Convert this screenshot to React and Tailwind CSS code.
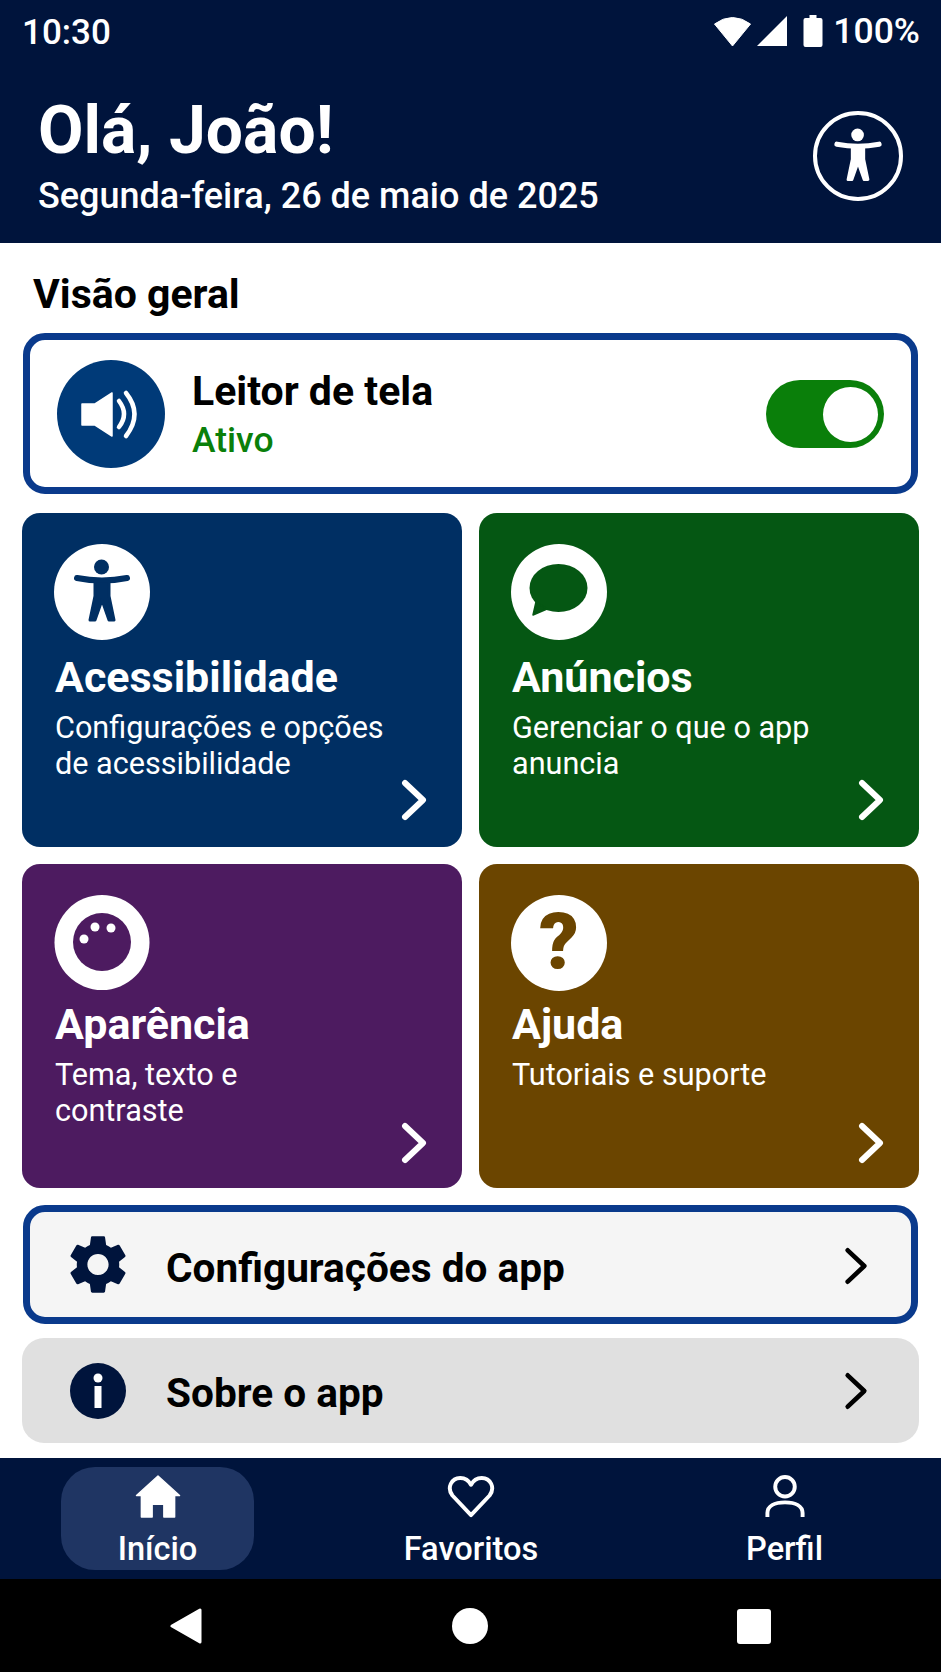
import { useState } from 'react';

function Figure({ className, color }) {
  return (
    <svg viewBox="-32 -34 64 68" className={className}>
      <circle cx="-0.5" cy="-25" r="7.5" fill={color} />
      <path d="M-25 -14 Q0 -9 25 -14" fill="none" stroke={color} strokeWidth="6" strokeLinecap="round" />
      <path
        d="M-7 -11 L7 -11 L7 4 L12 28 L7 28 L0 8 L-7 28 L-12 28 L-7 4 Z"
        fill={color}
        stroke={color}
        strokeWidth="3"
        strokeLinejoin="round"
      />
    </svg>
  );
}

function Chevron({ className, stroke = 'white', width = 6 }) {
  return (
    <svg viewBox="0 0 26 42" className={className}>
      <path d="M4 4 L22 21 L4 38" fill="none" stroke={stroke} strokeWidth={width} strokeLinecap="round" strokeLinejoin="round" />
    </svg>
  );
}

function Bubble({ color }) {
  return (
    <svg viewBox="0 0 96 96" className="w-24 h-24 shrink-0">
      <circle cx="48" cy="48" r="48" fill="white" />
      <ellipse cx="47.5" cy="44" rx="29" ry="24" fill={color} />
      <path d="M25 58 L22 71 L36 65 Z" fill={color} stroke={color} strokeWidth="1.5" strokeLinejoin="round" />
    </svg>
  );
}

function Ball({ color }) {
  return (
    <svg viewBox="0 0 96 96" className="w-24 h-24 shrink-0">
      <circle cx="48" cy="47.5" r="47.5" fill="white" />
      <circle cx="48" cy="47" r="29" fill={color} />
      <circle cx="30" cy="44" r="4.5" fill="white" />
      <circle cx="41" cy="32" r="4.5" fill="white" />
      <circle cx="57" cy="33" r="4.5" fill="white" />
    </svg>
  );
}

const cards = [
  {
    title: 'Acessibilidade',
    lines: ['Configurações e opções', 'de acessibilidade'],
    bg: 'bg-[#002f63]',
    icon: (
      <div className="w-24 h-24 shrink-0 rounded-full bg-white flex items-center justify-center">
        <Figure className="w-[64px] h-[68px]" color="#002f63" />
      </div>
    ),
  },
  {
    title: 'Anúncios',
    lines: ['Gerenciar o que o app', 'anuncia'],
    bg: 'bg-[#055713]',
    icon: <Bubble color="#055713" />,
  },
  {
    title: 'Aparência',
    lines: ['Tema, texto e', 'contraste'],
    bg: 'bg-[#4d1b60]',
    icon: <Ball color="#4d1b60" />,
  },
  {
    title: 'Ajuda',
    lines: ['Tutoriais e suporte'],
    bg: 'bg-[#6b4500]',
    icon: (
      <div className="w-24 h-24 shrink-0 rounded-full bg-white flex items-center justify-center">
        <span className="text-[78px] leading-none font-black text-[#6b4500]">?</span>
      </div>
    ),
  },
];

function Card({ card, tall }) {
  return (
    <div className={`${card.bg} relative rounded-[18px] flex flex-col pl-[32px] pt-[31px] text-white ${tall ? 'h-[334px]' : 'h-[324px]'}`}>
      {card.icon}
      <h3 className={`text-[43px] leading-[48px] font-bold pl-px ${tall ? 'mt-[13px]' : 'mt-[9px]'}`}>{card.title}</h3>
      <p className="text-[30.6px] leading-[36px] mt-[9px] pl-px">
        {card.lines.map((l) => (
          <span key={l} className="block">{l}</span>
        ))}
      </p>
      <Chevron className={`absolute right-[35px] w-[26px] h-[42px] ${tall ? 'bottom-[26px]' : 'bottom-[24px]'}`} />
    </div>
  );
}

function NavItem({ label, active, children }) {
  return (
    <div className={`w-[193px] h-[103px] rounded-[34px] flex flex-col items-center pt-[8px] text-white ${active ? 'bg-[#1f3563]' : ''}`}>
      <div className="h-[43px] flex items-center justify-center">{children}</div>
      <span className="text-[32.6px] leading-[36px] font-medium mt-[13px]">{label}</span>
    </div>
  );
}

export default function App() {
  const [reader, setReader] = useState(true);

  return (
    <div className="w-[941px] h-[1672px] flex flex-col bg-white font-['Roboto',sans-serif] overflow-hidden">
      <header className="h-[243px] bg-[#00143c] text-white shrink-0">
        <div className="h-[62px] flex items-center justify-between pl-[22px] pr-[21px]">
          <span className="text-[35px] font-medium leading-none mt-[2px]">10:30</span>
          <div className="flex items-center">
            <svg viewBox="0 0 36 30" className="w-[37px] h-[30px]">
              <path d="M0 8 Q18 -5 36 8 L18 30 Z" fill="white" stroke="white" strokeWidth="1" strokeLinejoin="round" />
            </svg>
            <svg viewBox="0 0 29 29" className="w-[30px] h-[30px] ml-[6px]">
              <path d="M29 0 L29 29 L0 29 Z" fill="white" />
            </svg>
            <svg viewBox="0 0 19 32" className="w-[20px] h-[32px] ml-[16px]">
              <path d="M6 0 H13 V3 H17 Q19 3 19 5 V30 Q19 32 17 32 H2 Q0 32 0 30 V5 Q0 3 2 3 H6 Z" fill="white" />
            </svg>
            <span className="text-[35.5px] font-medium leading-none ml-[10px] mt-[2px]">100%</span>
          </div>
        </div>
        <div className="flex items-start justify-between pl-[38px] pr-[38px]">
          <div>
            <h1 className="text-[66px] leading-[70px] font-bold mt-[34px]">Olá, João!</h1>
            <p className="text-[36px] leading-[42px] font-medium mt-[9px]">Segunda-feira, 26 de maio de 2025</p>
          </div>
          <div className="w-[90px] h-[90px] rounded-full border-[4px] border-white flex items-center justify-center mt-[49px]">
            <Figure className="w-[54px] h-[58px]" color="white" />
          </div>
        </div>
      </header>

      <main className="flex-1 flex flex-col px-[22px]">
        <h2 className="text-[41px] leading-[42px] font-bold text-black pl-[11px] mt-[30px] mb-[18px]">Visão geral</h2>

        <div className="h-[161px] border-[7px] border-[#0a3a8c] rounded-[22px] mx-px flex items-center pl-[27px] pr-[27px] bg-white">
          <div className="w-[108px] h-[108px] rounded-full bg-[#003a78] shrink-0">
            <svg viewBox="0 0 108 108" className="w-full h-full">
              <path d="M25 44 H38 L55 33 V76 L38 65 H25 Z" fill="white" stroke="white" strokeWidth="1.5" strokeLinejoin="round" />
              <path d="M62 41 Q72 54 62 67" fill="none" stroke="white" strokeWidth="4.5" strokeLinecap="round" />
              <path d="M69 33 Q86 54 69 76" fill="none" stroke="white" strokeWidth="4.5" strokeLinecap="round" />
            </svg>
          </div>
          <div className="ml-[27px] flex-1">
            <div className="text-[41px] leading-[46px] font-bold text-black -mt-[1px]">Leitor de tela</div>
            <div className="text-[35.5px] leading-[38px] font-medium text-[#0a7f0a] mt-[7px]">Ativo</div>
          </div>
          <button
            onClick={() => setReader(!reader)}
            className={`w-[118px] h-[68px] mt-[1px] rounded-full bg-[#0a7f0a] flex items-center px-[6px] ${reader ? 'justify-end' : 'justify-start'}`}
          >
            <span className="w-[55px] h-[55px] rounded-full bg-white block" />
          </button>
        </div>

        <div className="grid grid-cols-2 gap-x-[17px] mt-[19px]">
          <Card card={cards[0]} tall />
          <Card card={cards[1]} tall />
        </div>
        <div className="grid grid-cols-2 gap-x-[17px] mt-[17px]">
          <Card card={cards[2]} />
          <Card card={cards[3]} />
        </div>

        <div className="h-[119px] mt-[17px] mx-px border-[7px] border-[#0a3a8c] rounded-[22px] bg-[#f5f5f5] flex items-center pl-[40px] pr-[43px]">
          <svg viewBox="2.5 2 19 20" className="w-[56px] h-[59px] shrink-0">
            <path
              fill="#00143c"
              d="M19.14 12.94c.04-.3.06-.61.06-.94 0-.32-.02-.64-.07-.94l2.03-1.58c.18-.14.23-.41.12-.61l-1.92-3.32c-.12-.22-.37-.29-.59-.22l-2.39.96c-.5-.38-1.03-.7-1.62-.94l-.36-2.54c-.04-.24-.24-.41-.48-.41h-3.84c-.24 0-.43.17-.47.41l-.36 2.54c-.59.24-1.13.57-1.62.94l-2.39-.96c-.22-.08-.47 0-.59.22L2.74 8.87c-.12.21-.08.47.12.61l2.03 1.58c-.05.3-.09.63-.09.94s.02.64.07.94l-2.03 1.58c-.18.14-.23.41-.12.61l1.92 3.32c.12.22.37.29.59.22l2.39-.96c.5.38 1.03.7 1.62.94l.36 2.54c.05.24.24.41.48.41h3.84c.24 0 .44-.17.47-.41l.36-2.54c.59-.24 1.13-.56 1.62-.94l2.39.96c.22.08.47 0 .59-.22l1.92-3.32c.12-.22.07-.47-.12-.61l-2.01-1.58zM12 15.6c-1.98 0-3.6-1.62-3.6-3.6s1.62-3.6 3.6-3.6 3.6 1.62 3.6 3.6-1.62 3.6-3.6 3.6z"
            />
          </svg>
          <span className="text-[40.6px] leading-[46px] font-bold text-black ml-[40px] mt-[6px] flex-1">Configurações do app</span>
          <Chevron className="w-[24px] h-[42px] mt-[3px]" stroke="black" width={5} />
        </div>

        <div className="h-[105px] mt-[14px] rounded-[22px] bg-[#e0e0e0] flex items-center pl-[48px] pr-[51px]">
          <svg viewBox="0 0 56 56" className="w-[56px] h-[56px] shrink-0">
            <circle cx="28" cy="28" r="28" fill="#00143c" />
            <circle cx="28" cy="15" r="4.5" fill="white" />
            <rect x="24.5" y="23" width="7" height="22" fill="white" />
          </svg>
          <span className="text-[40.6px] leading-[46px] font-bold text-black ml-[40px] mt-[4px] flex-1">Sobre o app</span>
          <Chevron className="w-[24px] h-[42px]" stroke="black" width={5} />
        </div>
      </main>

      <nav className="h-[121px] bg-[#00143c] shrink-0 flex justify-between pt-[9px] pl-[61px] pr-[60px]">
        <NavItem label="Início" active>
          <svg viewBox="0 0 46 44" className="w-[46px] h-[43px]">
            <path
              fillRule="evenodd"
              d="M23 1 L45 21 H40 V43 H29 V30 H17 V43 H6 V21 H1 Z"
              fill="white"
              stroke="white"
              strokeWidth="1.5"
              strokeLinejoin="round"
            />
          </svg>
        </NavItem>
        <NavItem label="Favoritos">
          <svg viewBox="0 0 48 44" className="w-[48px] h-[43px]">
            <path
              d="M24 41 L5 21 C-1 13 4 3 13 3 C18 3 22 6 24 10 C26 6 30 3 35 3 C44 3 49 13 43 21 Z"
              fill="none"
              stroke="white"
              strokeWidth="4"
              strokeLinejoin="round"
            />
          </svg>
        </NavItem>
        <NavItem label="Perfil">
          <svg viewBox="0 0 40 44" className="w-[40px] h-[43px]">
            <circle cx="20" cy="12" r="10" fill="none" stroke="white" strokeWidth="4" />
            <path d="M2 43 V39 C2 32 9 28 20 28 C31 28 38 32 38 39 V43" fill="none" stroke="white" strokeWidth="4" />
          </svg>
        </NavItem>
      </nav>

      <div className="h-[93px] bg-black shrink-0 flex items-center justify-between pl-[170px] pr-[170px] pt-[1px]">
        <svg viewBox="0 0 32 36" className="w-[32px] h-[36px]">
          <path d="M30 2 V34 L2 18 Z" fill="white" stroke="white" strokeWidth="3" strokeLinejoin="round" />
        </svg>
        <div className="w-[36px] h-[36px] rounded-full bg-white" />
        <div className="w-[34px] h-[35px] rounded-[3px] bg-white" />
      </div>
    </div>
  );
}
